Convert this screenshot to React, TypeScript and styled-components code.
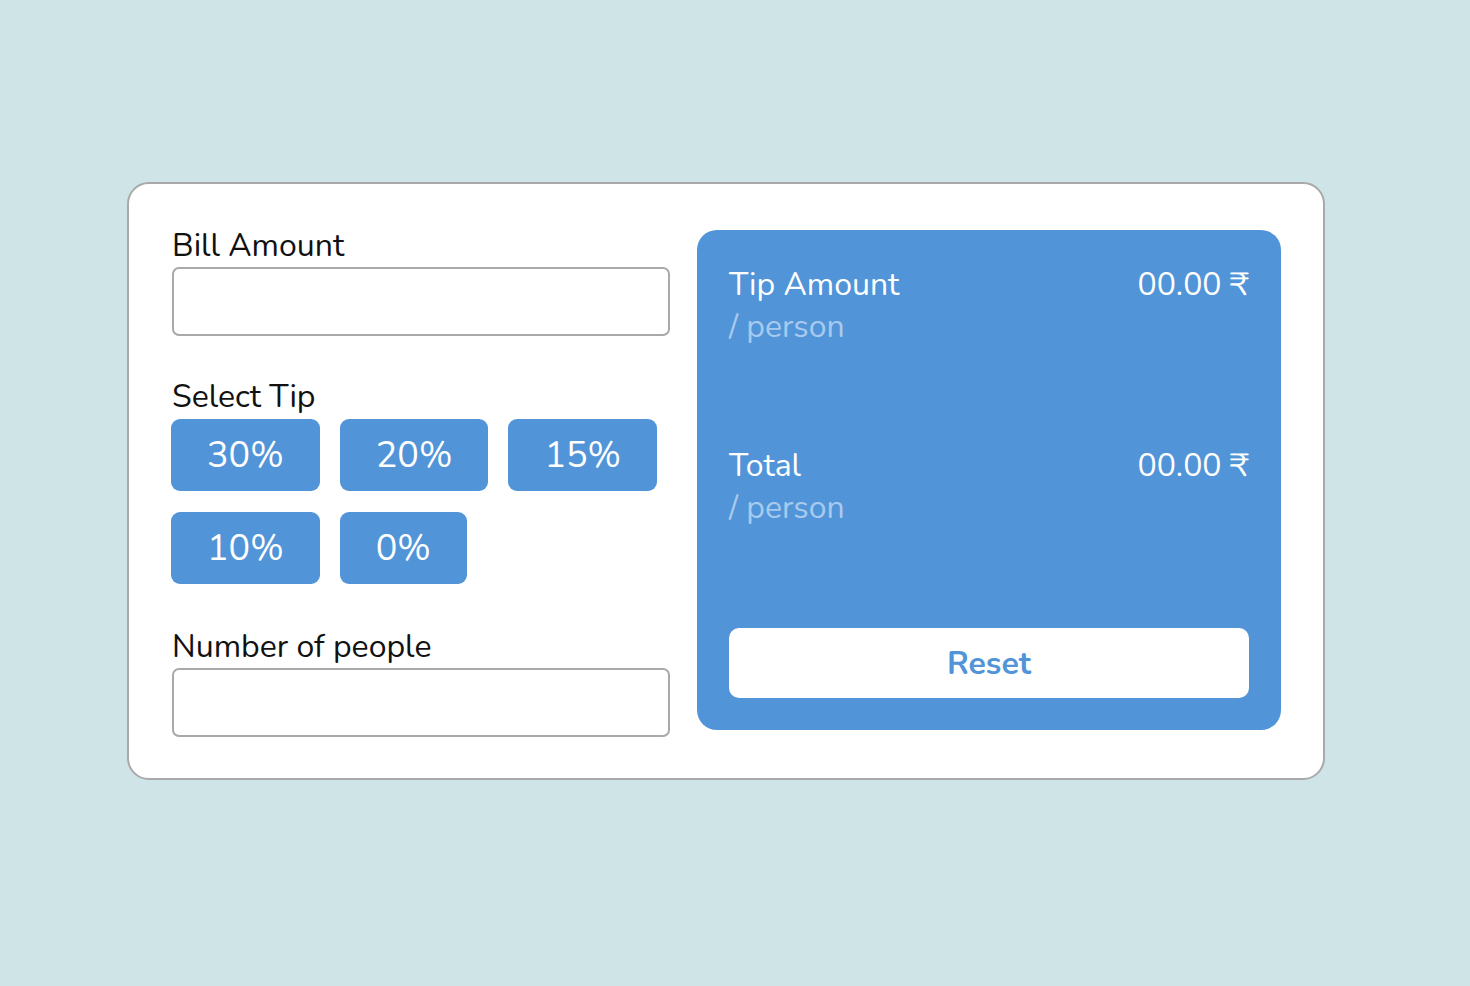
import React from "react";
import styled, { createGlobalStyle } from "styled-components";

const Global = createGlobalStyle`
  html, body { margin: 0; padding: 0; }
  body {
    background: #cee4e7;
    font-family: "Nunito", Lato, "Open Sans", "DejaVu Sans", sans-serif;
    min-height: 986px;
  }
  * { box-sizing: border-box; }
`;

const Page = styled.main`
  display: flex;
  justify-content: flex-start;
  padding: 182px 0 0 127px;
`;

const Card = styled.section`
  width: 1198px;
  background: #ffffff;
  border: 2px solid #a9a9a9;
  border-radius: 22px;
  padding: 46px 42px 41px 43px;
  display: flex;
  align-items: flex-start;
  gap: 27px;
`;

const Form = styled.div`
  width: 498px;
  display: flex;
  flex-direction: column;
`;

const Label = styled.label<{ $top?: number }>`
  display: block;
  font-size: 32px;
  line-height: 32px;
  color: #111;
  margin-top: ${(p) => p.$top ?? 0}px;
  margin-bottom: 5px;
`;

const Input = styled.input`
  width: 100%;
  height: 69px;
  border: 2px solid #a9a9a9;
  border-radius: 7px;
  font-size: 28px;
  padding: 0 14px;
  outline: none;
  font-family: inherit;
`;

const Tips = styled.div`
  display: flex;
  flex-wrap: wrap;
  gap: 21px 20px;
  width: 490px;
  margin: 1px 0 0 -1px;
`;

const TipButton = styled.button`
  height: 72px;
  min-width: 126px;
  padding: 0 36px;
  border: none;
  border-radius: 9px;
  background: #5194d8;
  color: #fff;
  font-family: inherit;
  font-size: 36px;
  cursor: pointer;
`;

const Result = styled.div`
  width: 584px;
  height: 500px;
  background: #5194d8;
  border-radius: 20px;
  padding: 34px 32px 32px;
  display: flex;
  flex-direction: column;
  color: #fff;
`;

const Row = styled.div<{ $gap?: number }>`
  display: flex;
  justify-content: space-between;
  align-items: flex-start;
  margin-top: ${(p) => p.$gap ?? 0}px;
`;

const Title = styled.div`
  font-size: 32px;
  line-height: 42px;
`;

const Sub = styled.div`
  font-size: 32px;
  line-height: 42px;
  color: #a8caee;
`;

const Value = styled.div`
  font-size: 32px;
  line-height: 42px;
`;

const Reset = styled.button`
  margin-top: auto;
  height: 70px;
  width: 100%;
  background: #fff;
  border: none;
  border-radius: 10px;
  color: #5194d8;
  font-family: inherit;
  font-weight: 700;
  font-size: 32px;
  cursor: pointer;
`;

const tips = ["30%", "20%", "15%", "10%", "0%"];

export default function App() {
  return (
    <>
      <Global />
      <Page>
        <Card>
          <Form>
            <Label>Bill Amount</Label>
            <Input type="text" />
            <Label $top={45}>Select Tip</Label>
            <Tips>
              {tips.map((t) => (
                <TipButton key={t}>{t}</TipButton>
              ))}
            </Tips>
            <Label $top={47}>Number of people</Label>
            <Input type="text" />
          </Form>
          <Result>
            <Row>
              <div>
                <Title>Tip Amount</Title>
                <Sub>/ person</Sub>
              </div>
              <Value>00.00 ₹</Value>
            </Row>
            <Row $gap={97}>
              <div>
                <Title>Total</Title>
                <Sub>/ person</Sub>
              </div>
              <Value>00.00 ₹</Value>
            </Row>
            <Reset>Reset</Reset>
          </Result>
        </Card>
      </Page>
    </>
  );
}
